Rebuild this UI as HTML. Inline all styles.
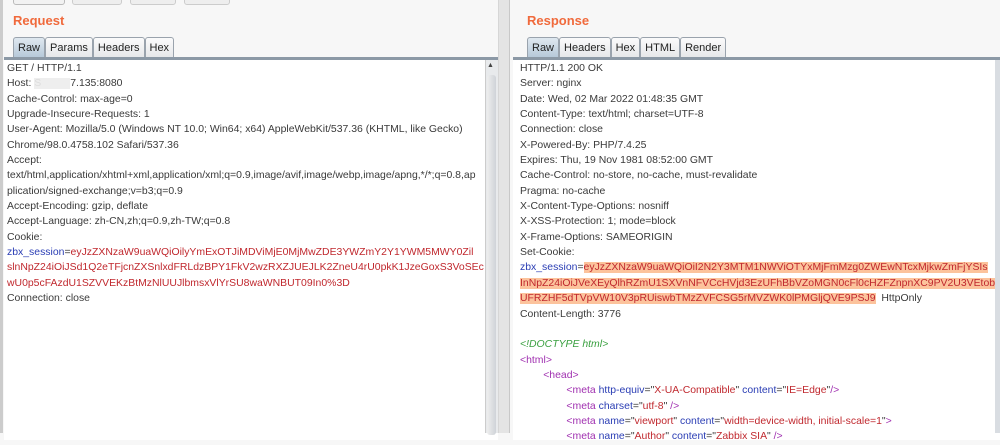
<!DOCTYPE html>
<html><head><style>
body{margin:0;width:1000px;height:433px;overflow:hidden;background:#f7f7f7;font-family:"Liberation Sans",sans-serif;position:relative}
.abs{position:absolute}
.title{color:#f06a3c;font-weight:bold;font-size:13px}
.tabs{position:absolute;display:flex;height:20px}
.tab{border:1px solid #9aa3ad;border-bottom:none;background:linear-gradient(#fbfbfb,#e6e8ea);font-size:11px;color:#222;padding:0 4px;line-height:20px;margin-right:0;border-radius:3px 3px 0 0}
.tab.act{background:linear-gradient(#dfe8f0,#b7c9d9)}
.box{position:absolute;background:#fff;border-top:3px solid #8c99a6}
.txt{position:absolute;font-size:10.45px;color:#3a3a3a;line-height:15.35px;white-space:pre}
.b{color:#2a3db4}.r{color:#c0282e}.hl{background:#fcc39c}
.tg{color:#a030b0}.at{color:#2a3db4}.v{color:#c0282e}.g{color:#3aa040;font-style:italic}
</style></head><body>
<div class="abs" style="left:13px;top:-6px;width:50px;height:9px;border:1px solid #bbb;border-radius:3px;background:#f2f2f2"></div>
<div class="abs" style="left:72px;top:-6px;width:48px;height:9px;border:1px solid #ccc;border-radius:3px;background:#eee"></div>
<div class="abs" style="left:130px;top:-6px;width:44px;height:9px;border:1px solid #ccc;border-radius:3px;background:#eee"></div>
<div class="abs" style="left:184px;top:-6px;width:44px;height:9px;border:1px solid #ccc;border-radius:3px;background:#eee"></div>
<div class="abs" style="left:0;top:0;width:3px;height:433px;background:#ccc"></div>
<div class="abs title" style="left:13px;top:13px">Request</div>
<div class="abs title" style="left:527px;top:13px">Response</div>
<div class="tabs" style="left:13px;top:37px"><div class="tab act">Raw</div><div class="tab">Params</div><div class="tab">Headers</div><div class="tab">Hex</div></div>
<div class="tabs" style="left:527px;top:37px"><div class="tab act">Raw</div><div class="tab">Headers</div><div class="tab">Hex</div><div class="tab">HTML</div><div class="tab">Render</div></div>
<div class="box" style="left:4px;top:57px;width:494px;height:380px"></div>
<div class="abs" style="left:485px;top:60px;width:12px;height:373px;background:#e8eaec;border-left:1px solid #ccc"></div>
<div class="abs" style="left:487px;top:75px;width:9px;height:360px;background:linear-gradient(90deg,#eee,#cfd3d8);border-radius:3px"></div>
<div class="abs" style="left:487px;top:62px;font-size:7px;color:#444">▲</div>
<div class="abs" style="left:498px;top:0;width:10px;height:433px;background:#e4e4e4;border-left:1px solid #d6d6d6;border-right:1px solid #c8c8c8"></div>
<div class="box" style="left:513px;top:57px;width:487px;height:380px"></div>
<div class="abs" style="left:995px;top:60px;width:5px;height:373px;background:#d9dde2"></div>
<div class="txt" style="left:7px;top:61px">GET / HTTP/1.1
Host: <span style="color:#ddd;background:#eee">S          </span>7.135:8080
Cache-Control: max-age=0
Upgrade-Insecure-Requests: 1
User-Agent: Mozilla/5.0 (Windows NT 10.0; Win64; x64) AppleWebKit/537.36 (KHTML, like Gecko)
Chrome/98.0.4758.102 Safari/537.36
Accept:
text/html,application/xhtml+xml,application/xml;q=0.9,image/avif,image/webp,image/apng,*/*;q=0.8,ap
plication/signed-exchange;v=b3;q=0.9
Accept-Encoding: gzip, deflate
Accept-Language: zh-CN,zh;q=0.9,zh-TW;q=0.8
Cookie:
<span class="b">zbx_session</span>=<span class="r">eyJzZXNzaW9uaWQiOilyYmExOTJiMDViMjE0MjMwZDE3YWZmY2Y1YWM5MWY0Zil</span>
<span class="r">slnNpZ24iOiJSd1Q2eTFjcnZXSnlxdFRLdzBPY1FkV2wzRXZJUEJLK2ZneU4rU0pkK1JzeGoxS3VoSEc</span>
<span class="r">wU0p5cFAzdU1SZVVEKzBtMzNlUUJlbmsxVlYrSU8waWNBUT09In0%3D</span>
Connection: close</div>
<div class="txt" style="left:520px;top:61px">HTTP/1.1 200 OK
Server: nginx
Date: Wed, 02 Mar 2022 01:48:35 GMT
Content-Type: text/html; charset=UTF-8
Connection: close
X-Powered-By: PHP/7.4.25
Expires: Thu, 19 Nov 1981 08:52:00 GMT
Cache-Control: no-store, no-cache, must-revalidate
Pragma: no-cache
X-Content-Type-Options: nosniff
X-XSS-Protection: 1; mode=block
X-Frame-Options: SAMEORIGIN
Set-Cookie:
<span class="b">zbx_session</span>=<span class="hl r">eyJzZXNzaW9uaWQiOiI2N2Y3MTM1NWViOTYxMjFmMzg0ZWEwNTcxMjkwZmFjYSIs</span>
<span class="hl r">InNpZ24iOiJVeXEyQlhRZmU1SXVnNFVCcHVjd3EzUFhBbVZoMGN0cFl0cHZFZnpnXC9PV2U3VEtob</span>
<span class="hl r">UFRZHF5dTVpVW10V3pRUiswbTMzZVFCSG5rMVZWK0lPMGljQVE9PSJ9</span>  HttpOnly
Content-Length: 3776

<span class="g">&lt;!DOCTYPE html&gt;</span>
<span class="tg">&lt;html&gt;</span>
        <span class="tg">&lt;head&gt;</span>
                <span class="tg">&lt;meta</span> <span class="at">http-equiv</span>="<span class="v">X-UA-Compatible</span>" <span class="at">content</span>="<span class="v">IE=Edge</span>"<span class="tg">/&gt;</span>
                <span class="tg">&lt;meta</span> <span class="at">charset</span>="<span class="v">utf-8</span>" <span class="tg">/&gt;</span>
                <span class="tg">&lt;meta</span> <span class="at">name</span>="<span class="v">viewport</span>" <span class="at">content</span>="<span class="v">width=device-width, initial-scale=1</span>"<span class="tg">&gt;</span>
                <span class="tg">&lt;meta</span> <span class="at">name</span>="<span class="v">Author</span>" <span class="at">content</span>="<span class="v">Zabbix SIA</span>" <span class="tg">/&gt;</span></div>
</body></html>
